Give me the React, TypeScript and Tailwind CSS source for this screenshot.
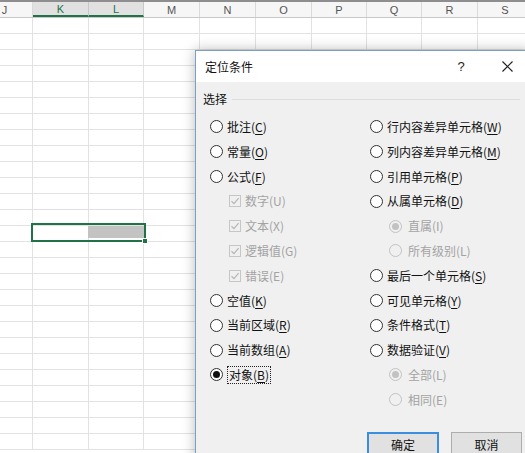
import React from "react"

type Col = { l: string; w: number; sel?: boolean }

const cols: Col[] = [
  { l: "J", w: 56 },
  { l: "K", w: 56, sel: true },
  { l: "L", w: 55, sel: true },
  { l: "M", w: 56 },
  { l: "N", w: 56 },
  { l: "O", w: 56 },
  { l: "P", w: 55 },
  { l: "Q", w: 55 },
  { l: "R", w: 56 },
  { l: "S", w: 55 },
]

const rowCount = 27

// access key label, e.g. 批注(C) with the C underlined
const Label = ({ text, k, disabled }: { text: string; k: string; disabled?: boolean }) => (
  <span className={disabled ? "text-[#a3a3a3]" : "text-[#111]"}>
    {text}(
    {disabled ? k : <span className="underline underline-offset-2">{k}</span>})
  </span>
)

const Radio = ({ checked, disabled }: { checked?: boolean; disabled?: boolean }) => (
  <span
    className={`flex h-[13px] w-[13px] shrink-0 items-center justify-center rounded-full border ${
      disabled ? "border-[#c2c2c2] bg-[#f0f0f0]" : "border-[#333] bg-white"
    }`}
  >
    {checked && (
      <span className={`h-[7px] w-[7px] rounded-full ${disabled ? "bg-[#c2c2c2]" : "bg-[#111]"}`} />
    )}
  </span>
)

const Check = () => (
  <span className="flex h-[12px] w-[12px] shrink-0 items-center justify-center border border-[#c6c6c6] bg-[#f0f0f0]">
    <svg width="10" height="10" viewBox="0 0 10 10">
      <path d="M1.5 5.2 L4 7.6 L8.6 2.2" fill="none" stroke="#b5b5b5" strokeWidth="1.2" />
    </svg>
  </span>
)

type Item = {
  text: string
  k: string
  kind: "radio" | "check" | "subradio"
  checked?: boolean
  disabled?: boolean
  focus?: boolean
}

const leftItems: Item[] = [
  { text: "批注", k: "C", kind: "radio" },
  { text: "常量", k: "O", kind: "radio" },
  { text: "公式", k: "F", kind: "radio" },
  { text: "数字", k: "U", kind: "check", disabled: true },
  { text: "文本", k: "X", kind: "check", disabled: true },
  { text: "逻辑值", k: "G", kind: "check", disabled: true },
  { text: "错误", k: "E", kind: "check", disabled: true },
  { text: "空值", k: "K", kind: "radio" },
  { text: "当前区域", k: "R", kind: "radio" },
  { text: "当前数组", k: "A", kind: "radio" },
  { text: "对象", k: "B", kind: "radio", checked: true, focus: true },
]

const rightItems: Item[] = [
  { text: "行内容差异单元格", k: "W", kind: "radio" },
  { text: "列内容差异单元格", k: "M", kind: "radio" },
  { text: "引用单元格", k: "P", kind: "radio" },
  { text: "从属单元格", k: "D", kind: "radio" },
  { text: "直属", k: "I", kind: "subradio", checked: true, disabled: true },
  { text: "所有级别", k: "L", kind: "subradio", disabled: true },
  { text: "最后一个单元格", k: "S", kind: "radio" },
  { text: "可见单元格", k: "Y", kind: "radio" },
  { text: "条件格式", k: "T", kind: "radio" },
  { text: "数据验证", k: "V", kind: "radio" },
  { text: "全部", k: "L", kind: "subradio", checked: true, disabled: true },
  { text: "相同", k: "E", kind: "subradio", disabled: true },
]

const Option = ({ item }: { item: Item }) => {
  const label = <Label text={item.text} k={item.k} disabled={item.disabled} />
  if (item.kind === "check") {
    return (
      <div className="flex h-[24.8px] items-center gap-[4px] pl-[19px]">
        <Check />
        {label}
      </div>
    )
  }
  return (
    <div className={`flex h-[24.8px] items-center ${item.kind === "subradio" ? "gap-[6px] pl-[19px]" : "gap-[4px]"}`}>
      <Radio checked={item.checked} disabled={item.disabled} />
      {item.focus ? <span className="border border-dotted border-[#222] px-px">{label}</span> : label}
    </div>
  )
}

export default function App() {
  return (
    <div className="relative h-[453px] w-[525px] overflow-hidden bg-white font-['Noto_Sans_CJK_SC',sans-serif] text-[12px] leading-[16px]">
      {/* sheet */}
      <div className="ml-[-23px] flex flex-col">
        <div className="flex h-[18px] border-t-2 border-b border-t-[#8e8e8e] border-b-[#c8c8c8] bg-[#f6f6f6]">
          {cols.map((c) => (
            <div
              key={c.l}
              style={{ width: c.w }}
              className={`flex shrink-0 items-center justify-center border-r font-['Liberation_Sans',sans-serif] text-[11px] ${
                c.sel
                  ? "border-r-[#c8c8c8] border-b-2 border-b-[#217346] bg-[#e1e1e1] text-[#217346]"
                  : "border-r-[#dadada] text-[#555]"
              }`}
            >
              {c.l}
            </div>
          ))}
        </div>
        {Array.from({ length: rowCount }).map((_, r) => (
          <div key={r} className="flex h-[16px] border-b border-[#e2e2e2]">
            {cols.map((c) => (
              <div key={c.l} style={{ width: c.w }} className="shrink-0 border-r border-[#e2e2e2]" />
            ))}
          </div>
        ))}
      </div>

      {/* selection K14:L14 */}
      <div className="absolute left-[88px] top-[226px] h-[12px] w-[56px] bg-[#c3c3c3]" />
      <div className="absolute left-[31px] top-[223px] h-[19px] w-[115px] border-2 border-[#217346]" />
      <div className="absolute left-[142px] top-[238px] h-[6px] w-[6px] border border-white bg-[#217346]" />

      {/* dialog */}
      <div className="absolute left-[195px] top-[50px] flex h-[420px] w-[336px] flex-col border border-[#7f9fbf] bg-[#f0f0f0] shadow-[0_0_12px_rgba(0,0,0,0.28)]">
        <div className="flex h-[31px] shrink-0 items-center bg-white">
          <span className="pl-[9px] text-[#111]">定位条件</span>
          <div className="ml-auto flex h-full">
            <div className="flex w-[46px] items-center justify-center font-['Liberation_Sans',sans-serif] text-[13px] text-[#222]">?</div>
            <div className="flex w-[46px] items-center justify-center">
              <svg width="11" height="11" viewBox="0 0 11 11">
                <path d="M0.5 0.5 L10.5 10.5 M10.5 0.5 L0.5 10.5" stroke="#222" strokeWidth="1.2" />
              </svg>
            </div>
          </div>
        </div>

        <div className="flex items-center pl-[7px] pr-[10px] pt-[9px]">
          <span className="text-[#111]">选择</span>
          <div className="ml-[5px] h-px flex-1 bg-[#dcdcdc]" />
        </div>

        <div className="mt-[7.6px] flex items-start px-[14px]">
          <div className="w-[160px] shrink-0">
            {leftItems.map((it) => (
              <Option key={it.text} item={it} />
            ))}
          </div>
          <div className="flex-1">
            {rightItems.map((it) => (
              <Option key={it.text} item={it} />
            ))}
          </div>
        </div>

        <div className="mt-[20px] flex justify-end gap-[12px] pr-[8px]">
          <button className="flex h-[25px] w-[72px] items-center justify-center border-2 border-[#3a8ee0] bg-[#e1e1e1] text-[#111]">
            确定
          </button>
          <button className="flex h-[25px] w-[71px] items-center justify-center border border-[#adadad] bg-[#e1e1e1] text-[#111]">
            取消
          </button>
        </div>
      </div>
    </div>
  )
}
